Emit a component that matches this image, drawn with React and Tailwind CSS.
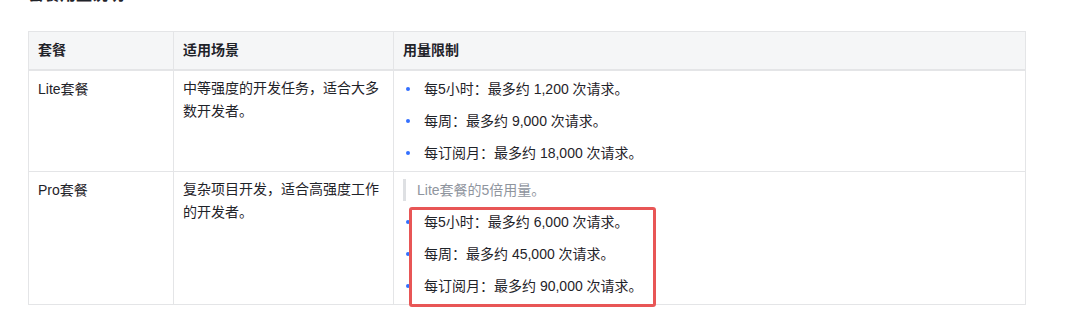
import React from "react";

const font = { fontFamily: '"Liberation Sans", Arial, "Noto Sans CJK SC", sans-serif' };

function Bullet({ children }) {
  return (
    <li className="flex items-center h-[22px] leading-[22px]">
      <span className="w-[4px] h-[4px] rounded-full bg-[#3370ff] ml-[3px] mr-[14px] shrink-0" />
      <span>{children}</span>
    </li>
  );
}

export default function App() {
  return (
    <div className="w-[1067px] h-[312px] bg-white overflow-hidden text-[#1f2329]" style={font}>
      <div className="pl-[28px] mt-[-17px] h-[24px] text-[16px] font-bold leading-[24px]">套餐用量说明</div>
      <div className="pl-[28px] pt-[24px]">
        <table className="border-collapse text-[14px] w-[997px] table-fixed">
          <colgroup>
            <col className="w-[145px]" />
            <col className="w-[220px]" />
            <col className="w-[632px]" />
          </colgroup>
          <thead>
            <tr className="bg-[#f5f6f7] h-[38px] border-b-2 border-[#e4e5e7]">
              <th className="border border-[#e4e5e7] border-b-2 text-left font-bold px-[9px] leading-[22px]">套餐</th>
              <th className="border border-[#e4e5e7] border-b-2 text-left font-bold px-[9px] leading-[22px]">适用场景</th>
              <th className="border border-[#e4e5e7] border-b-2 text-left font-bold px-[9px] leading-[22px]">用量限制</th>
            </tr>
          </thead>
          <tbody>
            <tr>
              <td className="border border-[#e4e5e7] align-top px-[9px] pt-[7px] pb-[7px] leading-[22px]">Lite套餐</td>
              <td className="border border-[#e4e5e7] align-top px-[9px] pt-[6px] pb-[7px] leading-[23px]">中等强度的开发任务，适合大多数开发者。</td>
              <td className="border border-[#e4e5e7] align-top px-[9px] pt-[7px] pb-[7px]">
                <ul className="flex flex-col gap-[10px]">
                  <Bullet>每5小时：最多约 1,200 次请求。</Bullet>
                  <Bullet>每周：最多约 9,000 次请求。</Bullet>
                  <Bullet>每订阅月：最多约 18,000 次请求。</Bullet>
                </ul>
              </td>
            </tr>
            <tr>
              <td className="border border-[#e4e5e7] align-top px-[9px] pt-[7px] pb-[7px] leading-[22px]">Pro套餐</td>
              <td className="border border-[#e4e5e7] align-top px-[9px] pt-[6px] pb-[7px] leading-[23px]">复杂项目开发，适合高强度工作的开发者。</td>
              <td className="border border-[#e4e5e7] align-top px-[9px] pt-[7px] pb-[7px]">
                <div className="relative">
                  <div className="border-l-[3px] border-[#dee0e3] pl-[11px] h-[22px] leading-[22px] text-[#8f959e] text-[14px]">Lite套餐的5倍用量。</div>
                  <ul className="flex flex-col gap-[10px] mt-[10px]">
                    <Bullet>每5小时：最多约 6,000 次请求。</Bullet>
                    <Bullet>每周：最多约 45,000 次请求。</Bullet>
                    <Bullet>每订阅月：最多约 90,000 次请求。</Bullet>
                  </ul>
                  <div className="absolute left-[6px] top-[28px] w-[247px] h-[100px] border-[3px] border-[#e85656] rounded-[3px] pointer-events-none" />
                </div>
              </td>
            </tr>
          </tbody>
        </table>
      </div>
    </div>
  );
}
